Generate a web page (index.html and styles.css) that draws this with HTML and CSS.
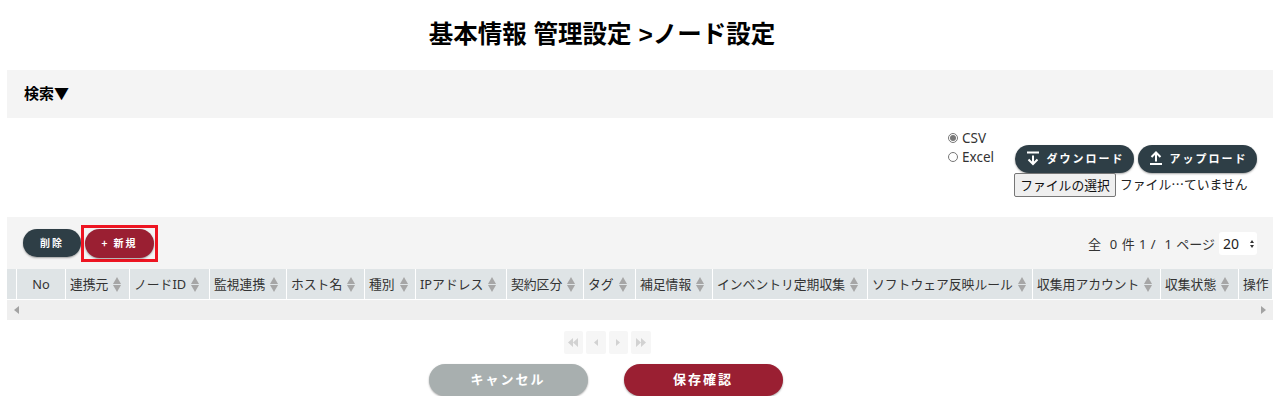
FILE: index.html
```html
<!DOCTYPE html>
<html lang="ja">
<head>
  <meta charset="UTF-8">
  <title>ノード設定</title>
  <link rel="stylesheet" href="styles.css">
</head>
<body>
  <h1 class="page-title">基本情報 管理設定 &gt;ノード設定</h1>

  <div class="search-bar">検索▼</div>

  <div class="io-area">
    <div class="format-group">
      <label class="format-option"><input type="radio" name="format" checked> CSV</label>
      <label class="format-option"><input type="radio" name="format"> Excel</label>
    </div>
    <div class="io-actions">
      <div class="io-buttons">
        <button class="pill pill-dark pill-io" type="button">
          <svg width="16" height="16" viewBox="0 0 16 16"><path d="M2 2.500h12M8 5.500v8.500M3.500 9.500L8 14l4.500-4.500" fill="none" stroke="#fff" stroke-width="2"/></svg>
          ダウンロード
        </button>
        <button class="pill pill-dark pill-io" type="button">
          <svg width="16" height="16" viewBox="0 0 16 16"><path d="M2 14h12M8 11.500V3M3.500 7L8 2.500 12.500 7" fill="none" stroke="#fff" stroke-width="2"/></svg>
          アップロード
        </button>
      </div>
      <div class="file-row">
        <button class="file-button" type="button">ファイルの選択</button>
        <span class="file-name">ファイル…ていません</span>
      </div>
    </div>
  </div>

  <div class="list-panel">
    <div class="toolbar">
      <button class="pill pill-dark pill-small" type="button">削除</button>
      <div class="highlight">
        <button class="pill pill-red pill-new" type="button">+ 新規</button>
      </div>
      <div class="page-info">
        <span>全&nbsp;&nbsp;0 件 1 /&nbsp;&nbsp;1 ページ</span>
        <div class="select-wrap">
          <select class="page-size"><option>20</option><option>50</option></select>
        </div>
      </div>
    </div>

    <div class="grid-head">
      <div class="cell"></div>
      <div class="cell cell-center">No</div>
      <div class="cell">連携元<span class="sort"></span></div>
      <div class="cell">ノードID<span class="sort"></span></div>
      <div class="cell">監視連携<span class="sort"></span></div>
      <div class="cell">ホスト名<span class="sort"></span></div>
      <div class="cell">種別<span class="sort"></span></div>
      <div class="cell">IPアドレス<span class="sort"></span></div>
      <div class="cell">契約区分<span class="sort"></span></div>
      <div class="cell">タグ<span class="sort"></span></div>
      <div class="cell">補足情報<span class="sort"></span></div>
      <div class="cell">インベントリ定期収集<span class="sort"></span></div>
      <div class="cell">ソフトウェア反映ルール<span class="sort"></span></div>
      <div class="cell">収集用アカウント<span class="sort"></span></div>
      <div class="cell">収集状態<span class="sort"></span></div>
      <div class="cell">操作</div>
    </div>

    <div class="scroll-row">
      <span class="arrow-left"></span>
      <span class="arrow-right"></span>
    </div>
  </div>

  <div class="pager">
    <span class="pager-btn"><svg width="10" height="9" viewBox="0 0 10 9"><path d="M5 0v9L0 4.500zM10 0v9L5 4.500z"/></svg></span>
    <span class="pager-btn"><svg width="5" height="9" viewBox="0 0 5 9"><path d="M5 1v7L1 4.500z"/></svg></span>
    <span class="pager-btn"><svg width="5" height="9" viewBox="0 0 5 9"><path d="M0 1v7l4-3.500z"/></svg></span>
    <span class="pager-btn"><svg width="10" height="9" viewBox="0 0 10 9"><path d="M0 0v9l5-4.500zM5 0v9l5-4.500z"/></svg></span>
  </div>

  <div class="form-actions">
    <button class="pill pill-gray pill-large" type="button">キャンセル</button>
    <button class="pill pill-red pill-large" type="button">保存確認</button>
  </div>
</body>
</html>
```

FILE: styles.css
```css
body {
  margin: 0;
  padding: 0 7px;
  background-color: #fff;
  color: #222;
  font-family: "Noto Sans", "Noto Sans CJK JP", sans-serif;
  font-size: 13px;
}

.page-title {
  margin: 0;
  padding: 19px 76px 0 0;
  height: 70px;
  box-sizing: border-box;
  text-align: center;
  font-family: "Liberation Sans", "Noto Sans CJK JP", sans-serif;
  font-size: 24.500px;
  line-height: 32px;
  color: #000;
}

.search-bar {
  height: 48px;
  line-height: 45px;
  padding-left: 17px;
  background-color: #f4f4f4;
  font-family: "Noto Sans CJK JP", sans-serif;
  font-size: 15px;
  font-weight: bold;
  color: #000;
}

.io-area {
  display: flex;
  justify-content: flex-end;
  height: 99px;
  padding: 11px 16px 0 0;
  box-sizing: border-box;
}

.format-group {
  display: flex;
  flex-direction: column;
  gap: 1px;
  margin-right: 20px;
}

.format-option {
  display: flex;
  align-items: center;
  gap: 4px;
  height: 18px;
  font-size: 13.500px;
  color: #333;
}

.format-option input {
  margin: 0;
  width: 10px;
  height: 10px;
  accent-color: #777;
}

.io-actions {
  padding-top: 16px;
}

.io-buttons {
  display: flex;
  gap: 4px;
  margin-left: 1px;
}

.pill {
  border: none;
  color: #fff;
  font-family: "Noto Sans CJK JP", sans-serif;
  font-weight: bold;
  border-radius: 16px;
  box-shadow: 0 1px 2px rgba(0, 0, 0, 0.35);
  padding: 0 0 2px;
}

.pill-dark {
  background-color: #2e3e46;
}

.pill-red {
  background-color: #9a1f32;
}

.pill-gray {
  background-color: #a8afaf;
}

.pill-io {
  display: flex;
  align-items: center;
  justify-content: center;
  gap: 6px;
  width: 119px;
  height: 28px;
  font-size: 11px;
  letter-spacing: 2px;
}

.file-row {
  display: flex;
  align-items: center;
  gap: 4px;
  font-family: "Noto Sans CJK JP", sans-serif;
  font-size: 12.800px;
  color: #222;
}

.file-name {
  padding-bottom: 3px;
}

.file-button {
  width: 102px;
  height: 24px;
  padding: 0 0 2px;
  background-color: #efefef;
  border: 1px solid #767676;
  border-radius: 2px;
  font-family: "Noto Sans CJK JP", sans-serif;
  font-size: 12.800px;
  color: #111;
}

.list-panel {
  background-color: #f4f4f4;
}

.toolbar {
  display: flex;
  align-items: center;
  height: 52px;
  padding: 0 16px;
}

.pill-small {
  width: 58px;
  height: 28px;
  font-size: 10px;
  letter-spacing: 2px;
}

.highlight {
  display: flex;
  padding: 1px;
  border: 3px solid #ee1522;
}

.pill-new {
  width: 69px;
  height: 29px;
  font-size: 10px;
  letter-spacing: 2px;
}

.page-info {
  display: flex;
  align-items: center;
  gap: 4px;
  margin-left: auto;
  font-size: 13px;
  word-spacing: 1px;
  color: #333;
}

.select-wrap {
  position: relative;
}

.select-wrap::before,
.select-wrap::after {
  content: "";
  position: absolute;
  right: 3px;
  border-left: 2.500px solid transparent;
  border-right: 2.500px solid transparent;
}

.select-wrap::before {
  top: 8px;
  border-bottom: 3px solid #333;
}

.select-wrap::after {
  top: 13px;
  border-top: 3px solid #333;
}

.page-size {
  display: block;
  appearance: none;
  width: 38px;
  height: 23px;
  padding: 0 0 0 4px;
  border: none;
  border-radius: 3px;
  background-color: #fff;
  font-family: "Noto Sans", sans-serif;
  font-size: 14px;
  color: #222;
}

.grid-head {
  display: grid;
  grid-template-columns: 10px 49px 64px 80px 77px 78px 51px 91px 77px 52px 77px 155px 165px 128px 78px 1fr;
  height: 31px;
  padding-bottom: 1px;
  box-sizing: border-box;
  background-color: #fff;
}

.cell {
  display: flex;
  align-items: center;
  gap: 5px;
  padding: 0 0 2px 4px;
  margin-right: 1px;
  background-color: #dfe4e6;
  white-space: nowrap;
  overflow: hidden;
  font-size: 12.800px;
  color: #333;
}

.cell-center {
  justify-content: center;
  padding: 0;
}

.sort {
  display: flex;
  flex-direction: column;
  gap: 1px;
  flex: none;
  margin-top: 2px;
}

.sort::before,
.sort::after {
  content: "";
  border-left: 4px solid transparent;
  border-right: 4px solid transparent;
}

.sort::before {
  border-bottom: 7px solid #a6a6a6;
}

.sort::after {
  border-top: 7px solid #a6a6a6;
}

.scroll-row {
  display: flex;
  align-items: center;
  justify-content: space-between;
  height: 20px;
  padding: 0 7px;
  background-color: #efefef;
}

.arrow-left,
.arrow-right {
  border-top: 4px solid transparent;
  border-bottom: 4px solid transparent;
}

.arrow-left {
  border-right: 5px solid #a3a3a3;
}

.arrow-right {
  border-left: 5px solid #a3a3a3;
}

.pager {
  display: flex;
  justify-content: center;
  gap: 3px;
  margin: 11px 0 10px;
  padding-right: 66px;
}

.pager-btn {
  display: flex;
  align-items: center;
  justify-content: center;
  width: 19.500px;
  height: 23px;
  background-color: #f6f6f6;
  border-radius: 2px;
  fill: #d2d2d2;
}

.form-actions {
  display: flex;
  justify-content: center;
  gap: 36px;
  padding-right: 69px;
}

.pill-large {
  width: 159px;
  height: 32px;
  padding-bottom: 3px;
  font-size: 13px;
  letter-spacing: 2px;
}
```
